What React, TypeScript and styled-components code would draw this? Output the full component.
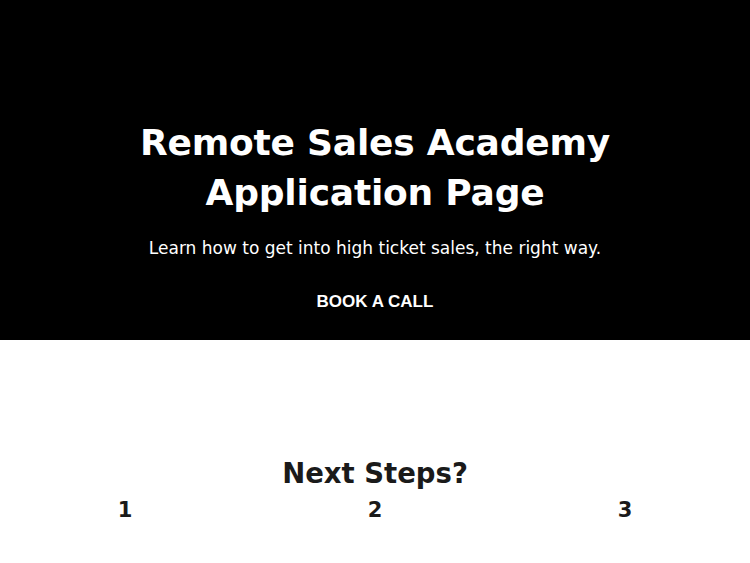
import React from "react";
import styled, { createGlobalStyle } from "styled-components";

const Global = createGlobalStyle`
  html, body { margin: 0; padding: 0; background: #fff; }
  body { font-family: "DejaVu Sans", "Liberation Sans", sans-serif; -webkit-font-smoothing: antialiased; }
`;

const Hero = styled.section`
  background: #000;
  color: #fff;
  height: 340px;
  box-sizing: border-box;
  padding-top: 118px;
  display: flex;
  flex-direction: column;
  align-items: center;
  text-align: center;
`;

const Title = styled.h1`
  margin: 0;
  font-family: "DejaVu Sans", sans-serif;
  font-weight: 700;
  font-size: 36px;
  line-height: 50px;
  letter-spacing: -0.2px;
`;

const Lead = styled.p`
  margin: 18px 0 0;
  font-family: "DejaVu Sans", sans-serif;
  font-size: 17px;
  line-height: 24px;
  font-weight: 400;
`;

const CallButton = styled.a`
  margin-top: 32px;
  font-family: "Liberation Sans", Arial, sans-serif;
  font-weight: 700;
  font-size: 17px;
  line-height: 20px;
  color: #fff;
  text-decoration: none;
  text-transform: uppercase;
`;

const Steps = styled.section`
  padding-top: 113px;
  display: flex;
  flex-direction: column;
  align-items: center;
  color: #1a1a1a;
`;

const StepsTitle = styled.h2`
  margin: 0;
  font-family: "DejaVu Sans", sans-serif;
  font-weight: 700;
  font-size: 27.5px;
  line-height: 40px;
`;

const StepRow = styled.div`
  width: 100%;
  display: grid;
  grid-template-columns: repeat(3, 1fr);
`;

const StepNumber = styled.div`
  text-align: center;
  font-family: "DejaVu Sans", sans-serif;
  font-weight: 700;
  font-size: 21px;
  line-height: 34px;
`;

export default function App() {
  return (
    <>
      <Global />
      <Hero>
        <Title>
          Remote Sales Academy
          <br />
          Application Page
        </Title>
        <Lead>Learn how to get into high ticket sales, the right way.</Lead>
        <CallButton href="#book">Book a call</CallButton>
      </Hero>
      <Steps>
        <StepsTitle>Next Steps?</StepsTitle>
        <StepRow>
          <StepNumber>1</StepNumber>
          <StepNumber>2</StepNumber>
          <StepNumber>3</StepNumber>
        </StepRow>
      </Steps>
    </>
  );
}
